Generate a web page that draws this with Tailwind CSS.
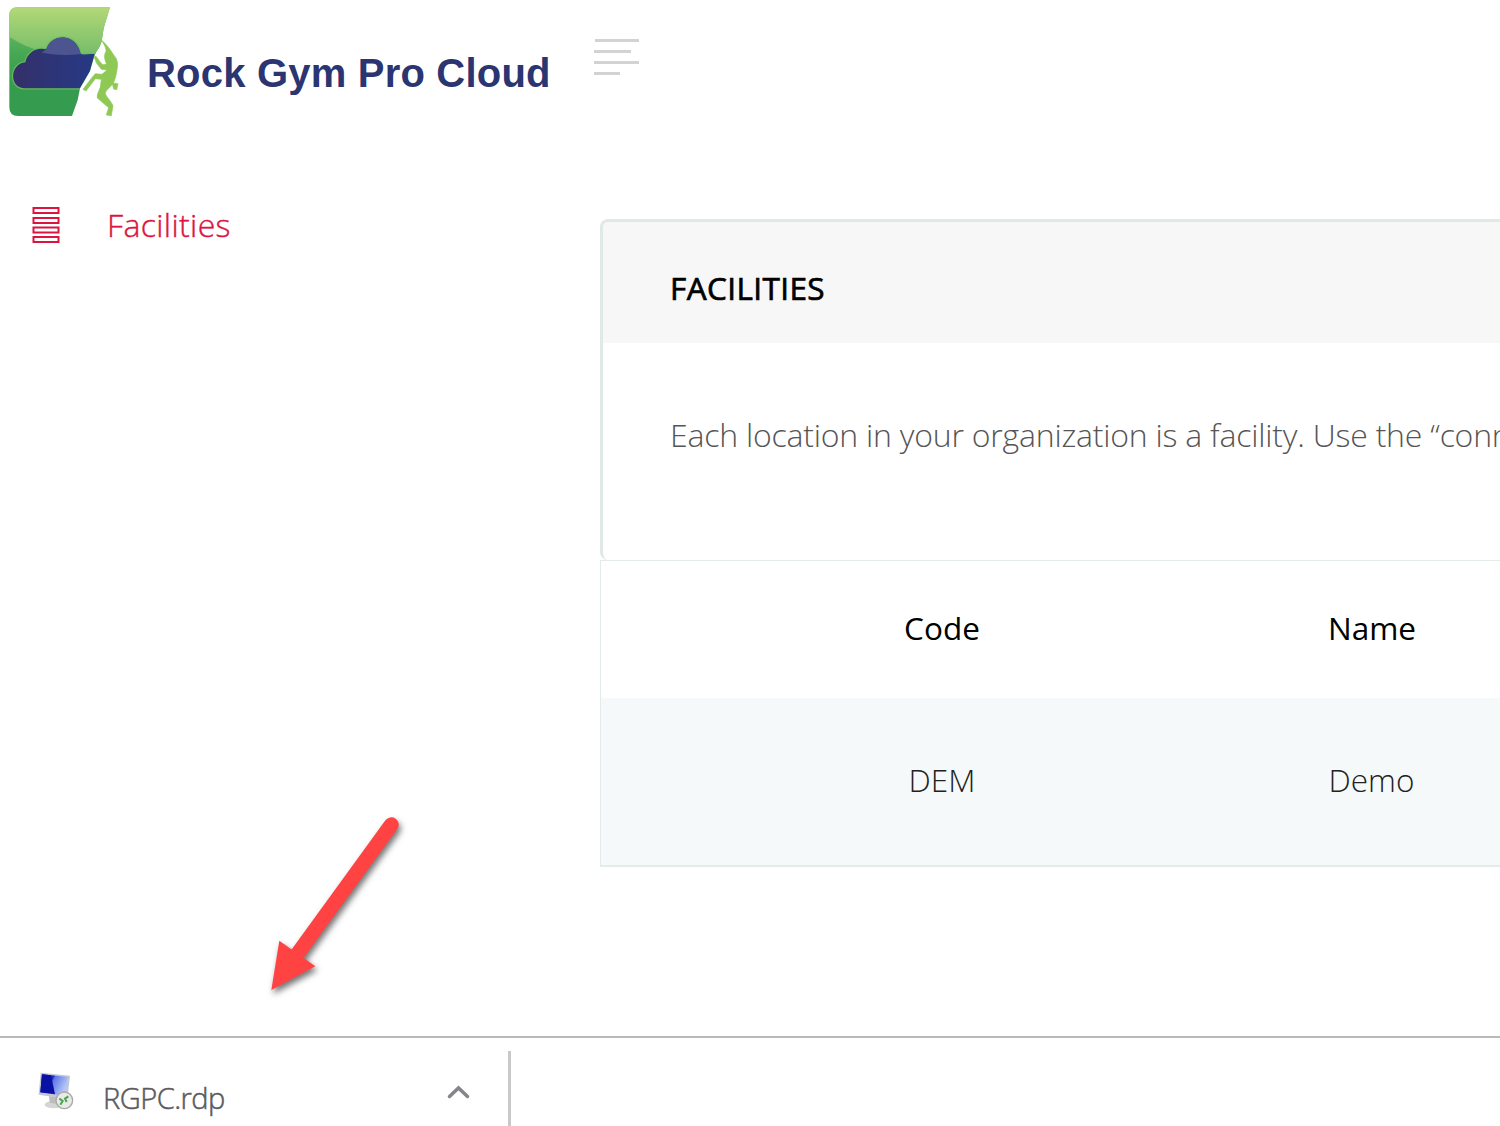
<!DOCTYPE html>
<html lang="en">
<head>
  <meta charset="UTF-8" />
  <meta name="viewport" content="width=device-width, initial-scale=1" />
  <title>Rock Gym Pro Cloud</title>
  <script src="https://cdn.jsdelivr.net/npm/@tailwindcss/browser@4"></script>
</head>
<body class="relative h-[1126px] w-[1500px] overflow-hidden bg-white flex flex-col font-['Open_Sans',sans-serif] text-[32px] leading-[44px]">
  <!-- Header -->
  <header class="flex h-[140px] shrink-0 items-start">
    <a href="#" class="flex items-start">
      <svg class="h-[125px] w-[140px]" viewBox="0 0 420 375">
        <defs>
          <linearGradient id="top" x1="0" y1="0" x2="0" y2="1">
            <stop offset="0" stop-color="#b3d877" />
            <stop offset="1" stop-color="#74bd69" />
          </linearGradient>
          <linearGradient id="base" x1="0" y1="0" x2="0" y2="1">
            <stop offset="0" stop-color="#7cc268" />
            <stop offset=".45" stop-color="#45a653" />
            <stop offset=".75" stop-color="#359b4f" />
          </linearGradient>
          <linearGradient id="cloud" x1="0" y1="0" x2="1" y2="0">
            <stop offset="0" stop-color="#343069" />
            <stop offset="1" stop-color="#263985" />
          </linearGradient>
          <clipPath id="rock">
            <path d="M52 22H330L317 65C308 88 309 110 303 130C297 148 287 154 281 174L270 213L240 265L233 300L216 348H54L28 332V46Z" />
          </clipPath>
        </defs>
        <path d="M52 22H330L317 65C308 88 309 110 303 130C297 148 287 154 281 174L270 213L240 265L233 300L216 348H54Q28 348 28 322V46Q28 22 52 22Z" fill="url(#base)" />
        <path d="M52 22H330L317 65C308 88 309 110 303 130C297 148 290 152 284 162C210 171 105 164 28 110V46Q28 22 52 22Z" fill="url(#top)" />
        <path d="M72 265C28 263 28 192 76 187C82 158 108 141 139 148C152 101 228 95 242 162C254 166 268 160 284 163L270 213L240 265Z" fill="url(#cloud)" stroke="#67bd59" stroke-width="7" paint-order="stroke" clip-path="url(#rock)" />
        <path d="M125 158L139 148C152 101 228 95 242 162Q188 170 125 158Z" fill="#4c5590" />
        <g fill="#8fc955" stroke="#8fc955" stroke-width="2">
          <path d="M304 120C319 132 332 150 341 165C351 176 354 187 352 203C349 221 347 240 337 253C329 264 319 270 316 278C314 286 331 299 339 317L334 347L319 345L326 323L292 294C290 283 297 274 301 261L304 238L286 236L258 273L249 268L278 230L286 221L306 223L321 210L304 208L290 190L282 170L288 169L300 185L308 194L320 193C315 181 311 170 316 158C322 150 314 136 304 120Z" />
          <path d="M336 248L354 251L350 269L341 267Z" />
        </g>
      </svg>
      <span class="mt-[51px] ml-[7px] w-[447px] whitespace-nowrap font-['Liberation_Sans',sans-serif] text-[40px] font-bold tracking-[0.2px] text-[#2b3572]">Rock Gym Pro Cloud</span>
    </a>
    <button class="mt-[39px] flex h-[36px] w-[45px] flex-col items-start justify-between" aria-label="Toggle menu">
      <span class="ml-px h-[3px] w-[44px] bg-[#d3d3d3]"></span>
      <span class="h-[3px] w-[37px] bg-[#d3d3d3]"></span>
      <span class="h-[3px] w-[45px] bg-[#d3d3d3]"></span>
      <span class="h-[3px] w-[26px] bg-[#d3d3d3]"></span>
    </button>
  </header>

  <div class="flex min-h-0 flex-1">
    <!-- Sidebar -->
    <nav class="w-[600px] shrink-0 pt-[63px] pl-[32px]">
      <a href="#" class="flex items-center text-[#dc1440]">
        <svg class="mr-[47px] h-[38px] w-[28px]" viewBox="0 0 28 38" fill="none" stroke="#dc1440" stroke-width="2">
          <rect x="1.5" y="2" width="25" height="5" />
          <rect x="1.5" y="12" width="25" height="5" />
          <rect x="1.5" y="21.5" width="25" height="5" />
          <rect x="1.5" y="31" width="25" height="5" />
        </svg>
        <span class="font-light tracking-[0.35px] [-webkit-text-stroke:0.4px_#dc1440]">Facilities</span>
      </a>
    </nav>

    <!-- Content -->
    <main class="min-w-0 flex-1 pt-[79px]">
      <section class="h-[341px] overflow-hidden rounded-l-lg border-[3px] border-r-0 border-b-0 border-[#e0e9e8]">
        <h2 class="h-[121px] bg-[#f7f7f7] pt-[44px] pl-[67px] text-[31.5px] font-normal tracking-[0.4px] text-black [-webkit-text-stroke:0.7px_#000]">FACILITIES</h2>
        <p class="overflow-hidden pt-[70px] pl-[67px] font-light tracking-[-0.22px] whitespace-nowrap text-[#555]">Each location in your organization is a facility. Use the “connect”</p>
      </section>
      <div class="overflow-hidden border border-r-0 border-b-2 border-[#e4ebeb]">
        <div class="grid h-[137px] grid-cols-[126px_430px_430px] items-center pb-[3px] text-center text-[31.5px] text-black">
          <span></span>
          <span>Code</span>
          <span>Name</span>
        </div>
        <div class="grid h-[167px] grid-cols-[126px_430px_429px] items-center bg-[#f5f9fa] pb-[3px] text-center text-[31.5px] font-light text-[#222]">
          <span></span>
          <span>DEM</span>
          <span>Demo</span>
        </div>
      </div>
    </main>
  </div>

  <!-- Download bar -->
  <footer class="flex h-[90px] shrink-0 border-t-2 border-[#b9b9b9] bg-white">
    <div class="mt-[13px] flex h-[75px] w-[511px] border-r-[3px] border-[#c9c9c9]">
      <svg class="mt-[9px] ml-[25px] h-[60px] w-[60px]" viewBox="0 0 180 180">
        <defs>
          <linearGradient id="screen" x1="0" y1="0" x2="1" y2="0.4">
            <stop offset="0" stop-color="#0712a8" />
            <stop offset=".45" stop-color="#1a2ccc" />
            <stop offset=".5" stop-color="#5f78e4" />
            <stop offset="1" stop-color="#b5c8fa" />
          </linearGradient>
        </defs>
        <ellipse cx="86" cy="134" rx="27" ry="11" fill="#d5d5d5" />
        <path d="M72 108L98 112L96 132L74 128Z" fill="#bdbdbd" />
        <path d="M47 38L135 47L127 117L41 104Z" fill="#c4c7cd" />
        <path d="M51 43L129 51L121 108L46 97Z" fill="url(#screen)" />
        <path d="M51 43L78 46L90 103L46 97Z" fill="#0a12a4" />
        <circle cx="118" cy="121" r="25" fill="#e9e9e9" stroke="#a9a9a9" stroke-width="4" />
        <path d="M103 116L113 123L106 134M130 109L120 116L125 126" fill="none" stroke="#4ca54d" stroke-width="6" />
      </svg>
      <span class="mt-[25px] ml-[18px] text-[29px] font-light tracking-[-0.5px] whitespace-nowrap text-[#5a5b60] [-webkit-text-stroke:0.5px_#5a5b60]">RGPC.rdp</span>
      <svg class="mt-[34px] mr-[38px] ml-auto h-[15px] w-[24px]" viewBox="0 0 24 15" fill="none" stroke="#858689" stroke-width="3.5" stroke-linecap="round">
        <path d="M3.5 11.5L12.5 3L21.5 11.5" />
      </svg>
    </div>
  </footer>

  <!-- Arrow pointing at the downloaded file -->
  <svg class="absolute top-[800px] left-[250px] h-[210px] w-[170px] drop-shadow-[2px_4px_3px_rgba(0,0,0,0.55)]" viewBox="0 0 510 630">
    <path d="M424 74L142 462" stroke="#ff4343" stroke-width="44" stroke-linecap="round" />
    <path d="M88 422L196 499L64 570Z" fill="#ff4343" />
  </svg>
</body>
</html>
